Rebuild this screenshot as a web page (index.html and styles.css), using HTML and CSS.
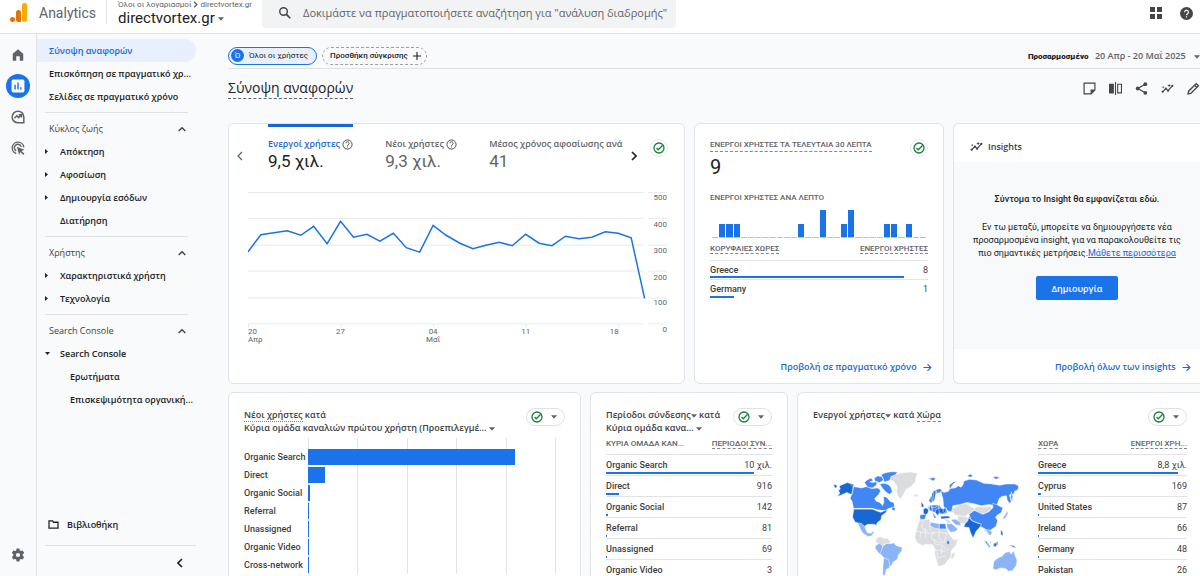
FILE: index.html
```html
<!DOCTYPE html>
<html lang="el">
<head>
  <meta charset="UTF-8" />
  <meta name="viewport" content="width=device-width, initial-scale=1" />
  <title>Analytics | Σύνοψη αναφορών</title>
  <link rel="stylesheet" href="styles.css">
</head>
<body>
  <!-- shared icons -->
  <svg class="sprite" aria-hidden="true">
    <symbol id="check" viewBox="0 0 24 24"><g fill="none" stroke="currentColor" stroke-width="2.6"><circle cx="12" cy="12" r="10"/><path d="M7 12l3.500 3.500L19 7"/></g></symbol>
    <symbol id="help" viewBox="0 0 24 24"><circle cx="12" cy="12" r="10" fill="none" stroke="currentColor" stroke-width="2"/><path d="M8.500 9.500a3.500 3.500 0 1 1 5.500 2.800c-1.200.9-2 1.500-2 2.900M12 16.500v2" fill="none" stroke="currentColor" stroke-width="2"/></symbol>
    <symbol id="down" viewBox="0 0 10 6"><path d="M0 0h10L5 6z" fill="currentColor"/></symbol>
    <symbol id="right" viewBox="0 0 6 10"><path d="M0 0l6 5-6 5z" fill="currentColor"/></symbol>
    <symbol id="up" viewBox="0 0 12 8"><path d="M1 7l5-5 5 5" fill="none" stroke="currentColor" stroke-width="2"/></symbol>
    <symbol id="arrow" viewBox="0 0 16 16"><path d="M1 8h13M8 2l6 6-6 6" fill="none" stroke="currentColor" stroke-width="2"/></symbol>
    <symbol id="insights" viewBox="0 0 24 24"><path d="M3 18l6-6 4 4 8-9" fill="none" stroke="currentColor" stroke-width="2"/><g fill="currentColor"><circle cx="3" cy="18" r="2"/><circle cx="9" cy="12" r="2"/><circle cx="13" cy="16" r="2"/><circle cx="21" cy="7" r="2"/><path d="M15 3l1 2.500L18.500 6.500 16 7.500 15 10l-1-2.500-2.500-1L14 5.500zM4 7l.7 1.800 1.800.7-1.800.7L4 12l-.7-1.800-1.800-.7 1.800-.7z"/></g></symbol>
  </svg>

  <header class="topbar">
    <svg class="logo" viewBox="0 0 18 20">
      <rect x="12" y="0" width="5" height="19" rx="2.500" fill="#f9ab00"/>
      <path d="M6 9.500a2.500 2.500 0 0 1 5 0V19H8.500A2.500 2.500 0 0 1 6 16.500z" fill="#e37400"/>
      <circle cx="2.500" cy="16.500" r="2.500" fill="#e37400"/>
    </svg>
    <span class="brand">Analytics</span>
    <div class="account">
      <div class="crumbs">Όλοι οι λογαριασμοί <svg viewBox="0 0 6 10"><path d="M1 1l4 4-4 4" fill="none" stroke="currentColor" stroke-width="2"/></svg> directvortex.gr</div>
      <button class="property">directvortex.gr <svg class="caret"><use href="#down"/></svg></button>
    </div>
    <label class="search">
      <svg viewBox="0 0 24 24"><circle cx="9.500" cy="9.500" r="6.500" fill="none" stroke="currentColor" stroke-width="2.500"/><path d="M14 14l7 7" stroke="currentColor" stroke-width="3"/></svg>
      <input type="text" aria-label="Αναζήτηση" placeholder="Δοκιμάστε να πραγματοποιήσετε αναζήτηση για &quot;ανάλυση διαδρομής&quot;">
    </label>
    <div class="top-actions">
      <button aria-label="Εφαρμογές"><svg viewBox="0 0 12 12"><path d="M0 0h5v5H0zM7 0h5v5H7zM0 7h5v5H0zM7 7h5v5H7z" fill="#444746"/></svg></button>
      <button aria-label="Βοήθεια"><svg class="help-full" viewBox="0 0 24 24"><circle cx="12" cy="12" r="12" fill="#444746"/><path d="M8.500 9.500a3.500 3.500 0 1 1 5.500 2.800c-1.200.9-2 1.500-2 2.900M12 17v2.300" fill="none" stroke="#fff" stroke-width="2.200"/></svg></button>
    </div>
  </header>

  <div class="layout">
    <nav class="rail" aria-label="Κύριο μενού">
      <a href="#" aria-label="Αρχική"><svg viewBox="0 0 24 24"><path d="M3 10l9-8 9 8v12h-6v-8H9v8H3z" fill="currentColor"/></svg></a>
      <a href="#" class="current" aria-label="Αναφορές"><svg viewBox="0 0 24 24"><rect x="1" y="1" width="22" height="22" rx="3" fill="#fff"/><path d="M7 10v8M12 6v12M17 14v4" stroke="#1a73e8" stroke-width="2.500"/></svg></a>
      <a href="#" aria-label="Εξερεύνηση"><svg viewBox="0 0 24 24"><path d="M22 22h-10a10 10 0 1 1 10-10z" fill="none" stroke="currentColor" stroke-width="2.600"/><path d="M6 14l4-4 3 3 5-5M13 8h5v5" fill="none" stroke="currentColor" stroke-width="2.600"/></svg></a>
      <a href="#" aria-label="Διαφήμιση"><svg viewBox="0 0 24 24"><path d="M9 21.500A10 10 0 1 1 22 11M9 17a6 6 0 1 1 8.500-7" fill="none" stroke="currentColor" stroke-width="2.400"/><path d="M10 10l13 5-5 2 5 5-2 2-5-5-2 5z" fill="currentColor"/></svg></a>
      <a href="#" class="settings" aria-label="Διαχειριστής"><svg viewBox="0 0 24 24"><path d="M9.500 1h5l.6 3.200 2 1.100 3-1.100 2.500 4.300-2.500 2.100v2.800l2.500 2.100-2.500 4.300-3-1.100-2 1.100-.6 3.200h-5l-.6-3.200-2-1.100-3 1.100-2.500-4.300 2.500-2.100v-2.800L1.400 8.500l2.500-4.300 3 1.100 2-1.100zM12 8.400a3.600 3.600 0 1 0 0 7.200 3.600 3.600 0 0 0 0-7.200z" fill="currentColor" fill-rule="evenodd"/></svg></a>
    </nav>

    <nav class="sidebar" aria-label="Αναφορές">
      <a href="#" class="item active">Σύνοψη αναφορών</a>
      <a href="#" class="item">Επισκόπηση σε πραγματικό χρ...</a>
      <a href="#" class="item">Σελίδες σε πραγματικό χρόνο</a>
      <hr>
      <button class="group">Κύκλος ζωής <svg><use href="#up"/></svg></button>
      <a href="#" class="item sub"><svg class="tri"><use href="#right"/></svg>Απόκτηση</a>
      <a href="#" class="item sub"><svg class="tri"><use href="#right"/></svg>Αφοσίωση</a>
      <a href="#" class="item sub"><svg class="tri"><use href="#right"/></svg>Δημιουργία εσόδων</a>
      <a href="#" class="item sub"><span class="tri"></span>Διατήρηση</a>
      <hr>
      <button class="group">Χρήστης <svg><use href="#up"/></svg></button>
      <a href="#" class="item sub"><svg class="tri"><use href="#right"/></svg>Χαρακτηριστικά χρήστη</a>
      <a href="#" class="item sub"><svg class="tri"><use href="#right"/></svg>Τεχνολογία</a>
      <hr>
      <button class="group">Search Console <svg><use href="#up"/></svg></button>
      <a href="#" class="item sub"><svg class="tri open"><use href="#down"/></svg>Search Console</a>
      <a href="#" class="item leaf">Ερωτήματα</a>
      <a href="#" class="item leaf">Επισκεψιμότητα οργανική...</a>
      <div class="sidebar-foot">
        <a href="#" class="library"><svg viewBox="0 0 12 10"><path d="M1 1h4l1 1.500h5V9H1z" fill="none" stroke="currentColor" stroke-width="1.400"/></svg>Βιβλιοθήκη</a>
        <hr>
        <button class="collapse" aria-label="Σύμπτυξη"><svg viewBox="0 0 6 10"><path d="M5 1L1 5l4 4" fill="none" stroke="currentColor" stroke-width="1.600"/></svg></button>
      </div>
    </nav>

    <main>
      <div class="filters">
        <button class="chip"><span class="chip-badge">Ό</span>Όλοι οι χρήστες</button>
        <button class="chip chip-add">Προσθήκη σύγκρισης <svg viewBox="0 0 10 10"><path d="M5 0v10M0 5h10" stroke="currentColor" stroke-width="1.400"/></svg></button>
        <button class="dates"><b>Προσαρμοσμένο</b> 20 Απρ - 20 Μαΐ 2025 <svg class="caret"><use href="#down"/></svg></button>
      </div>

      <div class="title-row">
        <h1>Σύνοψη αναφορών</h1>
        <div class="tools">
          <button aria-label="Σημείωση"><svg viewBox="0 0 24 24"><path d="M2 2h20v13l-7 7H2z" fill="none" stroke="currentColor" stroke-width="2.200"/><path d="M14 22v-8h8z" fill="currentColor"/></svg></button>
          <button aria-label="Σύγκριση"><svg viewBox="0 0 24 24"><path d="M0 3h9v18H0zM11 0h2v24h-2z" fill="currentColor"/><path d="M16 4h7v16h-7z" fill="none" stroke="currentColor" stroke-width="2"/></svg></button>
          <button aria-label="Κοινοποίηση"><svg viewBox="0 0 24 24"><path d="M19 4L5 12l14 8" fill="none" stroke="currentColor" stroke-width="2.200"/><g fill="currentColor"><circle cx="19" cy="4" r="3.500"/><circle cx="5" cy="12" r="3.500"/><circle cx="19" cy="20" r="3.500"/></g></svg></button>
          <button aria-label="Insights"><svg><use href="#insights"/></svg></button>
          <button aria-label="Επεξεργασία"><svg viewBox="0 0 24 24"><path d="M2 22l1-5L17 3l4 4L7 21zM14 6l4 4" fill="none" stroke="currentColor" stroke-width="2.600"/></svg></button>
        </div>
      </div>

      <div class="cards cards-top">
        <section class="card trend">
          <div class="metrics">
            <button class="step" aria-label="Προηγούμενο"><svg viewBox="0 0 6 10"><path d="M5 1L1 5l4 4" fill="none" stroke="currentColor" stroke-width="1.300"/></svg></button>
            <button class="metric selected"><span>Ενεργοί χρήστες <svg><use href="#help"/></svg></span><strong>9,5 χιλ.</strong></button>
            <button class="metric"><span>Νέοι χρήστες <svg><use href="#help"/></svg></span><strong>9,3 χιλ.</strong></button>
            <button class="metric last"><span>Μέσος χρόνος αφοσίωσης ανά</span><strong>41</strong></button>
            <button class="step next" aria-label="Επόμενο"><svg viewBox="0 0 6 10"><path d="M1 1l4 4-4 4" fill="none" stroke="currentColor" stroke-width="1.700"/></svg></button>
            <span class="status"><svg><use href="#check"/></svg></span>
          </div>
          <svg class="line-chart" viewBox="0 0 422 160">
            <path class="grid" d="M0 6.500h398M402 6.500h19M0 32.500h398M402 32.500h19M0 59.500h398M402 59.500h19M0 85.500h398M402 85.500h19M0 112.500h398M402 112.500h19M0 138.500h398M402 138.500h19M.5 139v3M93.500 139v3M186.500 139v3M279.500 139v3M372.500 139v3"/>
            <polyline points="0,66 13,49 26,47 39.500,45 53,49.500 66,40.500 79.500,58 93,35.500 106,51.500 119.500,48.500 132.500,55.500 146,47.500 159,62 172.500,66.500 186,39.500 199,49.500 213,57.500 226,63 239,59.500 252.500,56.500 265.500,60 279,48.500 292.500,57.500 305.500,60 319,50.500 332.500,53 345.500,51.500 359,46 372,47.500 385,52 398.500,113"/>
            <g class="y-labels"><text x="421" y="14">500</text><text x="421" y="41">400</text><text x="421" y="67">300</text><text x="421" y="94">200</text><text x="421" y="120">100</text><text x="421" y="147">0</text></g>
            <g class="x-labels"><text class="start" x="0" y="149">20</text><text class="start" x="0" y="157">Απρ</text><text x="93" y="149">27</text><text x="186" y="149">04</text><text x="186" y="157">Μαΐ</text><text x="279" y="149">11</text><text x="368" y="149">18</text></g>
          </svg>
        </section>

        <section class="card realtime">
          <div class="realtime-head">
            <h2 class="caps dashed">ΕΝΕΡΓΟΙ ΧΡΗΣΤΕΣ ΤΑ ΤΕΛΕΥΤΑΙΑ 30 ΛΕΠΤΑ</h2>
            <span class="status"><svg><use href="#check"/></svg></span>
          </div>
          <div class="big">9</div>
          <h3 class="caps">ΕΝΕΡΓΟΙ ΧΡΗΣΤΕΣ ΑΝΑ ΛΕΠΤΟ</h3>
          <div class="minutes">
            <i></i><i class="one"></i><i class="one"></i><i class="one"></i><i></i><i></i><i></i><i></i><i></i><i></i>
            <i></i><i></i><i class="one"></i><i></i><i></i><i class="two"></i><i></i><i></i><i class="one"></i><i class="two"></i>
            <i></i><i></i><i></i><i></i><i class="one"></i><i class="one"></i><i></i><i class="one"></i><i></i><i></i>
          </div>
          <table class="compact">
            <thead><tr><th><span class="dashed">ΚΟΡΥΦΑΙΕΣ ΧΩΡΕΣ</span></th><th><span class="dashed">ΕΝΕΡΓΟΙ ΧΡΗΣΤΕΣ</span></th></tr></thead>
            <tbody>
              <tr style="--share: 89%"><td>Greece</td><td>8</td></tr>
              <tr style="--share: 11%"><td>Germany</td><td>1</td></tr>
            </tbody>
          </table>
          <a href="#" class="more">Προβολή σε πραγματικό χρόνο <svg><use href="#arrow"/></svg></a>
        </section>

        <section class="card insights">
          <h2><svg><use href="#insights"/></svg>Insights</h2>
          <div class="insights-body">
            <h3>Σύντομα το Insight θα εμφανίζεται εδώ.</h3>
            <p>Εν τω μεταξύ, μπορείτε να δημιουργήσετε νέα προσαρμοσμένα insight, για να παρακολουθείτε τις πιο σημαντικές μετρήσεις.<a href="#">Μάθετε περισσότερα</a></p>
            <button class="primary">Δημιουργία</button>
          </div>
          <a href="#" class="more">Προβολή όλων των insights <svg><use href="#arrow"/></svg></a>
        </section>
      </div>

      <div class="cards cards-bottom">
        <section class="card">
          <div class="card-head">
            <h2><span class="dotted">Νέοι χρήστες</span> κατά<br>Κύρια ομάδα καναλιών πρώτου χρήστη (Προεπιλεγμέ... <svg class="caret"><use href="#down"/></svg></h2>
            <button class="quality" aria-label="Ποιότητα δεδομένων"><svg><use href="#check"/></svg><svg class="caret"><use href="#down"/></svg></button>
          </div>
          <ul class="bars">
            <li><span>Organic Search</span><div><i style="width: 84%"></i></div></li>
            <li><span>Direct</span><div><i style="width: 7%"></i></div></li>
            <li><span>Organic Social</span><div><i style="width: 1%"></i></div></li>
            <li><span>Referral</span><div><i style="width: 0.6%"></i></div></li>
            <li><span>Unassigned</span><div><i style="width: 0.3%"></i></div></li>
            <li><span>Organic Video</span><div><i style="width: 0.3%"></i></div></li>
            <li><span>Cross-network</span><div><i style="width: 0.3%"></i></div></li>
          </ul>
        </section>

        <section class="card">
          <div class="card-head">
            <h2>Περίοδοι σύνδεσης<svg class="caret"><use href="#down"/></svg> κατά<br>Κύρια ομάδα κανα... <svg class="caret"><use href="#down"/></svg></h2>
            <button class="quality" aria-label="Ποιότητα δεδομένων"><svg><use href="#check"/></svg><svg class="caret"><use href="#down"/></svg></button>
          </div>
          <table>
            <thead><tr><th>ΚΥΡΙΑ ΟΜΑΔΑ ΚΑΝ...</th><th><span class="dashed">ΠΕΡΙΟΔΟΙ ΣΥΝ...</span></th></tr></thead>
            <tbody>
              <tr style="--share: 89%"><td>Organic Search</td><td>10 χιλ.</td></tr>
              <tr style="--share: 8%"><td>Direct</td><td>916</td></tr>
              <tr style="--share: 1.2%"><td>Organic Social</td><td>142</td></tr>
              <tr style="--share: 0.7%"><td>Referral</td><td>81</td></tr>
              <tr style="--share: 0.6%"><td>Unassigned</td><td>69</td></tr>
              <tr style="--share: 0%"><td>Organic Video</td><td>3</td></tr>
            </tbody>
          </table>
        </section>

        <section class="card">
          <div class="card-head">
            <h2>Ενεργοί χρήστες<svg class="caret"><use href="#down"/></svg> κατά <span class="dashed">Χώρα</span></h2>
            <button class="quality" aria-label="Ποιότητα δεδομένων"><svg><use href="#check"/></svg><svg class="caret"><use href="#down"/></svg></button>
          </div>
          <div class="geo">
            <svg class="map" viewBox="90 240 580 340" role="img" aria-label="Παγκόσμιος χάρτης">
              <!-- no data -->
              <g class="c0">
                <path d="M281 256l22-7 32-3 20 5-5 10-3 16-14 14-14 8-8 17-7 10-9-6-4-16 2-14-8-12-8-6-14-5z"/>
                <path d="M342 314l12-1 2 4-9 5z"/>
                <path d="M231 446l10-5 10 5 14 1 8 10-8 6-8-2-6 10-8 0-8-10-8-2zM243 478l10 0 10 12 12 10-4 10-10-2-8-10-8-4z"/>
                <path d="M360 392l30-4 4 10 12 4 14 16 22 0 12 22 12 12 12 -4-8 20-14 16 0 18-10 10-8 12-12 6-10 0-4-16-6-20 2-14-8-14-20-2-12 4-16-10-6-14 4-20z"/>
                <path d="M459 492l8-6-1 14-6 10-5-6z"/>
                <path d="M456 356l14-4 12-8 22-2 14 10 10 4-8 14-14 4-10 8-16-4-12-2-6-8-8-4z"/>
                <path d="M526 354l14-4 14 2 22-2 2 8-16 12-18 4-16-6z"/>
                <path d="M476 378l14 2 16 2 2 10-10 10-14 0-8-10z"/>
                <path d="M548 404l14 4 6 10 8 8-4 12-8-12-8 0-4-10z"/>
                <path d="M437 388l14 2 6 12-14-2z"/>
              </g>
              <path class="lines" d="M372 392l-6 22 22 14M392 398l0 22 14 14M348 424l40 8 30-4 34 6M376 416l4 30M420 420l-2 20 10 16M400 430l-4 16 24 14 28-4M404 450l4 14 24 4 6 12M402 480l34 6 14-8M414 486l0 20 24-6M428 470l-2 24M364 426l-2 20M442 430l-6 26"/>
              <!-- low -->
              <g class="c1">
                <path d="M172 396l12 3 10 6 4 14 4 10 12 2 6-6 3 4-6 10-12 2-16-10-8-14z"/>
                <path d="M216 432l14 4M228 468l10-6 10 4 2 14 6 12-8 8-12-10-10-14z"/>
                <path d="M250 470l10-8 16 0 6-2 8 8 18 6-1 10-10 12-4 14-12 8-6 12-10 2-1-14-12-14-10-12z"/>
                <path d="M252 506l14 4 4 12 0 14-10 4-4 18-7 0 1-26z"/>
                <path d="M394 398l26 4 0 16-14-2-14-8zM442 402l16 0 18 16-6 8-16 2-10-14zM456 390l12-2 14 8 4 12-16-2-10-10z"/>
                <path d="M585 516l12-10 14-6 8-10 12-4 6 8 8-10 4 14 6 14-2 16-12 16-12 2-8-8-16-2-14 6-9-4z"/>
                <path d="M558 416l10 2 12 10-4 10-8-4zM572 452l6 8-3 2z"/>
                <path d="M618 376l8-12 2 6-8 16-10 2z"/>
              </g>
              <!-- medium -->
              <g class="c2">
                <path d="M161 290l24 4 16-4 14 6 20-2 8 8-6 12-12 12 4 8 12 4 8 10 4-12-2-16 10 2 12 14 10 2 2 14-18 4 -10 8-24-4-14-4-58 0-4-20-6-10 5-16z"/>
                <path d="M194 278l8-8 12-6 6 8-10 4 12 2 10-4-2 12-12 8-14-2zM224 264l10-6 12 2 6 10-12 8-14-4zM244 254l14-6 18-3 18 1-6 8-14 6-4 12-16 4-4-12zM240 282l14-2 12 4 8 8 4 14-8 8-12-8-10-12z"/>
                <path d="M277 352l10 2-2 10-8-4z"/>
                <path d="M424 302l10 6 14-4 4-8 16-2 10-6 8 4 6-8 2-10 16-6 22 2 22 10 24 2 24 4 20-4 26 0 12 6-2 12-10 4-4 10-8-2-4 4 5 18-4 8-8-12-2-12-14 2-8 6-4 12-6 16-12-8-8-2-24 4-22-6-22-4-20 6-22 4-4 18-10-2-14-14-2-24z"/>
                <path d="M452 298l-2-12 12-10 12-2-12 8zM504 258l10-6 8 6-8 4zM582 260l12 0 10 4-14 4zM388 266l14-3 8 3-8 7z"/>
                <path d="M638 306l4 14-2 18-4-16z"/>
                <path d="M510 374l16-12 12 6 14 6 18-8 12-12 0-14 14 6 16 8-4 14-12 8-6 6 6 10-4 18-18 12-12-2-14-8-16-4-14-12z"/>
                <path d="M388 334l10-20 12-14 12-4 6 6-6 6-12 4-6 16-8 12zM386 350l12-4 22 0 8 10 14 0 2 14-14 4-8-2-8 6-6-10-10-2-10-8z"/>
                <path d="M361 376l14-2 6 2-4 12-14 2zM420 402l18 0 4 16-22 0zM441 454l10 0 0 12-8-2zM398 370l6 4 8 10-6 2z"/>
                <path d="M556 452l8 4 10 14 0 4-10-8zM584 462l12-6 2 8-8 8-8-4zM630 466l14 2 10 8-10-2z"/>
              </g>
              <!-- high -->
              <g class="c3">
                <path d="M100 286l8-2 4 6-6 5zM118 288l14-6 10-4 20 6-5 30-8-2-8-4-18 8-11 4 8-10-5-8 6-4z"/>
                <path d="M162 358l56 0 14 6 12 4 12-6 6-2-2 8-14 10-2 12-12 10-2 8-6-4-20 0-10 6-8-8-20-4-8-16z"/>
                <path d="M498 402l8-8 4-14 8 12 16 8 14 4-8 12-8 8-10 22-8-18-4-14-16-2z"/>
                <path d="M372 358l8-4 8 6-2 10-8 6-6-6zM365 336l7 8 2 8-8 0zM398 312l6-10 6 4-4 24-7 10zM410 360l10-6 12 4 8-4 0 14-10 4-8-2-8 6-6-8z"/>
                <path d="M424 380l24-1 6 6-28 3zM390 348l6-2 4 14-8 4z"/>
                <path d="M606 420l6 8 0 12-6-6zM586 462l8-2-2 12-8-2zM566 460l8 12-4 2z"/>
              </g>
              <path class="lines" d="M152 284l8 6-5 26M162 357l56 0 14 6 26 0M404 306l-4 34M412 302l-2 24 4 18M386 350l20 4 12-8M396 346l4 22M418 344l2 28M432 350l0 18M506 382l14 12 28 10"/>
            </svg>
            <table>
              <thead><tr><th><span class="dashed">ΧΩΡΑ</span></th><th><span class="dashed">ΕΝΕΡΓΟΙ ΧΡΗ...</span></th></tr></thead>
              <tbody>
                <tr style="--share: 94%"><td>Greece</td><td>8,8 χιλ.</td></tr>
                <tr style="--share: 2%"><td>Cyprus</td><td>169</td></tr>
                <tr style="--share: 1%"><td>United States</td><td>87</td></tr>
                <tr style="--share: 1%"><td>Ireland</td><td>66</td></tr>
                <tr style="--share: 0.7%"><td>Germany</td><td>48</td></tr>
                <tr style="--share: 0%"><td>Pakistan</td><td>26</td></tr>
              </tbody>
            </table>
          </div>
        </section>
      </div>
    </main>
  </div>
</body>
</html>
```
FILE: styles.css
```css
* {
  box-sizing: border-box;
}
body {
  margin: 0;
  height: 100vh;
  display: flex;
  flex-direction: column;
  overflow: hidden;
  font-family: "Open Sans", "Noto Sans", sans-serif;
  font-size: 9px;
  color: #202124;
  background: #f8fafc;
}
button {
  font: inherit;
  color: inherit;
  background: none;
  border: none;
  padding: 0;
  cursor: pointer;
}
a {
  color: inherit;
  text-decoration: none;
}
h1, h2, h3, p, ul {
  margin: 0;
  padding: 0;
  font-size: 9px;
  font-weight: 400;
}
hr {
  border: none;
  height: 1px;
  background: #dfe1e5;
  margin: 4px 0 4px 8px;
}
.sprite {
  display: none;
}
.caret {
  width: 6px;
  height: 4px;
  color: #5f6368;
  vertical-align: middle;
}
.dashed {
  border-bottom: 1px dashed #80868b;
}
.dotted {
  border-bottom: 1px dotted #80868b;
}

/* top bar */
.topbar {
  display: flex;
  flex: none;
  height: 34px;
  background: #fff;
  border-bottom: 1px solid #e0e2e6;
  font-family: Roboto, sans-serif;
}
.logo {
  width: 18px;
  height: 20px;
  margin: 3px 0 0 10px;
}
.brand {
  font-size: 14px;
  line-height: 27px;
  color: #5f6368;
  padding: 0 10px 0 11px;
  height: 24px;
  border-right: 1px solid #e0e2e6;
}
.account {
  width: 155px;
  padding-left: 11px;
}
.crumbs {
  font-size: 8px;
  line-height: 9px;
  color: #5f6368;
  white-space: nowrap;
}
.crumbs svg {
  width: 5px;
  height: 7px;
  vertical-align: middle;
}
.property {
  font-size: 15px;
  line-height: 18px;
}
.search {
  flex: 0 1 414px;
  display: flex;
  align-items: center;
  height: 28px;
  padding: 0 8px 3px 16px;
  background: #f1f3f4;
  border-radius: 0 0 4px 4px;
  color: #444746;
}
.search svg {
  width: 14px;
  height: 14px;
}
.search input {
  flex: 1;
  min-width: 0;
  border: none;
  outline: none;
  background: none;
  font-family: "Open Sans", "Noto Sans", sans-serif;
  font-size: 11px;
  padding: 0 0 0 11px;
}
.search input::placeholder {
  color: #5f6368;
}
.top-actions {
  margin-left: auto;
  display: flex;
  align-items: center;
  gap: 18px;
  height: 26px;
  padding-right: 7px;
}
.top-actions svg {
  display: block;
  width: 12px;
  height: 12px;
}
.top-actions .help-full {
  width: 13px;
  height: 13px;
}

/* navigation */
.layout {
  flex: 1;
  min-height: 0;
  display: flex;
}
.rail {
  width: 37px;
  flex: none;
  border-right: 1px solid #e0e2e6;
  display: flex;
  flex-direction: column;
  align-items: center;
  gap: 7px;
  padding: 9px 0;
  color: #5f6368;
}
.rail a {
  width: 24px;
  height: 24px;
  border-radius: 50%;
  display: flex;
  align-items: center;
  justify-content: center;
}
.rail svg {
  width: 14px;
  height: 14px;
}
.rail .current {
  background: #1a73e8;
}
.rail .settings {
  margin-top: auto;
}
.sidebar {
  width: 159px;
  flex: none;
  padding-top: 5px;
  display: flex;
  flex-direction: column;
}
.sidebar > hr {
  margin-right: 8px;
  flex: none;
}
.item, .group {
  display: flex;
  align-items: center;
  flex: none;
  height: 23px;
  padding-left: 12px;
  font-weight: 600;
  white-space: nowrap;
}
.active {
  background: #e8f0fe;
  color: #1967d2;
  border-radius: 0 12px 12px 0;
}
.group {
  justify-content: space-between;
  padding-right: 10px;
  font-weight: 400;
  color: #3c4043;
}
.group svg {
  width: 8px;
  height: 6px;
}
.item.sub {
  padding-left: 8px;
}
.tri {
  width: 3px;
  height: 5px;
  margin-right: 12px;
}
.tri.open {
  width: 5px;
  height: 3px;
  margin-right: 10px;
}
.item.leaf {
  padding-left: 33px;
}
.sidebar-foot {
  margin-top: auto;
  padding-bottom: 4px;
}
.sidebar-foot hr {
  margin: 9px 0 8px 8px;
}
.library {
  display: flex;
  align-items: center;
  gap: 8px;
  height: 24px;
  padding-left: 11px;
  font-weight: 600;
}
.library svg {
  width: 11px;
  height: 9px;
}
.collapse {
  display: block;
  margin: 0 13px 0 auto;
}
.collapse svg {
  display: block;
  width: 6px;
  height: 18px;
}

/* page heading */
main {
  flex: 1;
  min-width: 0;
  padding-left: 32px;
}
.filters {
  display: flex;
  align-items: center;
  gap: 5px;
  height: 35px;
  padding-top: 9px;
  border-bottom: 1px solid #dfe1e5;
}
.chip {
  display: flex;
  align-items: center;
  gap: 5px;
  height: 18px;
  padding: 0 8px 0 2px;
  border: 1px solid #1a73e8;
  border-radius: 9px;
  background: #e8f0fe;
  font-family: Roboto, sans-serif;
  font-size: 8px;
}
.chip-badge {
  width: 13px;
  height: 13px;
  line-height: 13px;
  border-radius: 50%;
  background: #1a73e8;
  color: #fff;
  text-align: center;
}
.chip-add {
  padding: 0 5px 0 7px;
  border: 1px dashed #9aa0a6;
  background: none;
  font-weight: 500;
}
.chip-add svg {
  width: 8px;
  height: 8px;
}
.dates {
  margin-left: auto;
  white-space: nowrap;
  color: #5f6368;
  font-weight: 600;
}
.dates b {
  font-family: Roboto, sans-serif;
  font-size: 8px;
  color: #202124;
  margin-right: 4px;
}
.dates .caret {
  margin-left: 6px;
}
.title-row {
  display: flex;
  justify-content: space-between;
  height: 54px;
  padding-top: 9px;
}
h1 {
  font-size: 14px;
  line-height: 20px;
  height: 21px;
  border-bottom: 1px dashed #5f6368;
}
.tools {
  display: flex;
  align-items: center;
  gap: 13px;
  height: 20px;
  color: #444746;
}
.tools svg {
  display: block;
  width: 13px;
  height: 13px;
}

/* cards */
.cards {
  display: grid;
  gap: 9px;
}
.cards-top {
  grid-template-columns: 457fr 250fr 247fr;
  height: 261px;
  margin-bottom: 8px;
}
.cards-bottom {
  grid-template-columns: 353fr 198fr 403fr;
}
.card {
  min-width: 0;
  background: #fff;
  border: 1px solid #e0e3e7;
  border-radius: 6px;
  display: flex;
  flex-direction: column;
}
.card:last-child {
  border-right: none;
  border-radius: 6px 0 0 6px;
}
.cards-bottom .card {
  padding: 15px 15px 0;
}
.cards-bottom .card:last-child {
  padding-right: 13px;
}
.status {
  width: 18px;
  height: 18px;
  flex: none;
  border: 1px solid #e8eaed;
  border-radius: 50%;
  display: flex;
  align-items: center;
  justify-content: center;
  color: #188038;
}
.status svg {
  width: 12px;
  height: 12px;
}
.more {
  margin-top: auto;
  padding-bottom: 10px;
  align-self: flex-end;
  color: #1967d2;
  font-weight: 600;
  line-height: 12px;
}
.more svg {
  width: 9px;
  height: 9px;
  margin-left: 4px;
  vertical-align: middle;
}
.caps {
  font-family: Roboto, sans-serif;
  font-size: 8px;
  line-height: 12px;
  font-weight: 500;
  color: #5f6368;
}

/* trend */
.metrics {
  display: flex;
  padding: 0 16px 0 8px;
}
.metric {
  text-align: left;
  padding-top: 13px;
  margin-right: 32px;
  color: #5f6368;
  white-space: nowrap;
}
.metric span {
  display: block;
  line-height: 14px;
  font-weight: 600;
}
.metric svg {
  width: 11px;
  height: 11px;
  vertical-align: middle;
  color: #3c4043;
}
.metric strong {
  display: block;
  font-family: Roboto, sans-serif;
  font-size: 17px;
  line-height: 20px;
  font-weight: 400;
}
.metric.selected {
  border-top: 3px solid #1967d2;
  padding-top: 10px;
  color: #1967d2;
}
.metric.selected strong {
  color: #202124;
}
.metric.last {
  flex: 1;
  margin-right: 8px;
}
.step {
  margin: 27px 25px 0 0;
  height: 10px;
  color: #5f6368;
}
.step svg {
  display: block;
  width: 6px;
  height: 10px;
}
.step.next {
  margin-right: 13px;
  color: #202124;
}
.metrics .status {
  margin-top: 15px;
}
.line-chart {
  display: block;
  margin: 15px 16px 0 19px;
}
.line-chart .grid {
  stroke: #e8eaed;
  fill: none;
}
.line-chart polyline {
  fill: none;
  stroke: #1a73e8;
  stroke-width: 1.5;
}
.line-chart text {
  font-family: Roboto, sans-serif;
  font-size: 8px;
  fill: #5f6368;
}
.y-labels {
  text-anchor: end;
}
.x-labels {
  text-anchor: middle;
}
.x-labels .start {
  text-anchor: start;
}

/* realtime */
.realtime {
  padding: 15px 15px 0;
}
.realtime-head {
  display: flex;
  justify-content: space-between;
  align-items: flex-start;
  height: 18px;
}
.big {
  font-family: Roboto, sans-serif;
  font-size: 20px;
  line-height: 20px;
}
.realtime h3 {
  margin-top: 15px;
}
.minutes {
  display: flex;
  align-items: flex-end;
  gap: 1px;
  height: 28px;
  margin: 6px 2px 0;
}
.minutes i {
  flex: 1;
  border-bottom: 1px solid #bdc1c6;
}
.minutes .one {
  height: 14px;
  background: #1a73e8;
}
.minutes .two {
  height: 28px;
  background: #1a73e8;
}

/* tables */
table {
  width: 100%;
  border-collapse: collapse;
  font-family: Roboto, sans-serif;
  font-size: 9px;
}
th, td {
  padding: 0;
  height: 21px;
  text-align: left;
  white-space: nowrap;
}
th {
  height: 19px;
  padding-bottom: 2px;
  font-size: 8px;
  font-weight: 500;
  color: #5f6368;
}
td {
  font-weight: 500;
  color: #3c4043;
}
th:last-child, td:last-child {
  text-align: right;
}
td:last-child {
  font-weight: 400;
}
tr {
  border-bottom: 1px solid #e0e3e7;
}
tbody tr {
  background: linear-gradient(#1a73e8, #1a73e8) left bottom / var(--share) 2px no-repeat;
}
.compact th {
  height: 22px;
  padding: 0;
}
.compact td {
  height: 19px;
}
.compact tbody tr:last-child {
  border-bottom: none;
}
.realtime .more {
  margin-right: -4px;
}

/* insights */
.insights h2 {
  display: flex;
  align-items: center;
  gap: 5px;
  height: 38px;
  padding: 6px 0 0 16px;
  color: #3c4043;
}
.insights h2 svg {
  width: 13px;
  height: 13px;
}
.insights-body {
  flex: 1;
  background: #f8f9fa;
  text-align: center;
  padding: 31px 16px 0;
  font-family: Roboto, sans-serif;
}
.insights h3 {
  font-weight: 500;
  line-height: 13px;
  margin-bottom: 15px;
}
.insights p {
  line-height: 13px;
}
.insights p a {
  color: #1967d2;
  text-decoration: underline;
}
.primary {
  margin-top: 16px;
  width: 82px;
  height: 24px;
  border-radius: 2px;
  background: #1a73e8;
  color: #fff;
  font-family: "Open Sans", "Noto Sans", sans-serif;
  font-weight: 600;
}
.insights .more {
  padding: 12px 9px 10px;
}

/* bottom cards */
.card-head {
  display: flex;
  justify-content: space-between;
  height: 27px;
}
.card-head h2, .insights h2 {
  font-weight: 600;
  color: #3c4043;
}
.card-head h2 {
  line-height: 13px;
  white-space: nowrap;
}
.quality {
  flex: none;
  display: flex;
  align-items: center;
  gap: 8px;
  height: 18px;
  padding: 0 7px 0 4px;
  border: 1px solid #dfe1e5;
  border-radius: 9px;
}
.quality svg:first-child {
  width: 12px;
  height: 12px;
  color: #188038;
}
.bars {
  list-style: none;
  font-family: Roboto, sans-serif;
  font-weight: 500;
  color: #3c4043;
  margin: 3px 9px 0 0;
}
.bars li {
  display: flex;
  align-items: center;
  height: 18px;
}
.bars span {
  width: 64px;
  flex: none;
}
.bars div {
  flex: 1;
  height: 18px;
  padding: 1px 0;
  border-right: 1px solid #e0e3e7;
  background: repeating-linear-gradient(90deg, #e0e3e7 0 1px, transparent 1px 20%);
}
.bars li:first-child {
  height: 28px;
  align-items: flex-end;
  line-height: 18px;
}
.bars li:first-child div {
  height: 28px;
  padding-top: 11px;
}
.bars i {
  display: block;
  height: 16px;
  background: #1a73e8;
}
.geo {
  display: flex;
  align-items: flex-start;
  gap: 16px;
}
.map {
  flex: 1;
  min-width: 0;
  margin: 35px 0 0 17px;
}
.geo table {
  flex: none;
  width: 149px;
}
.map path {
  stroke: #fff;
  stroke-width: 1.5;
}
.c0 {
  fill: #dadce0;
}
.c1 {
  fill: #8ab4f8;
}
.c2 {
  fill: #4285f4;
}
.c3 {
  fill: #1967d2;
}
.map .lines {
  fill: none;
}
```
